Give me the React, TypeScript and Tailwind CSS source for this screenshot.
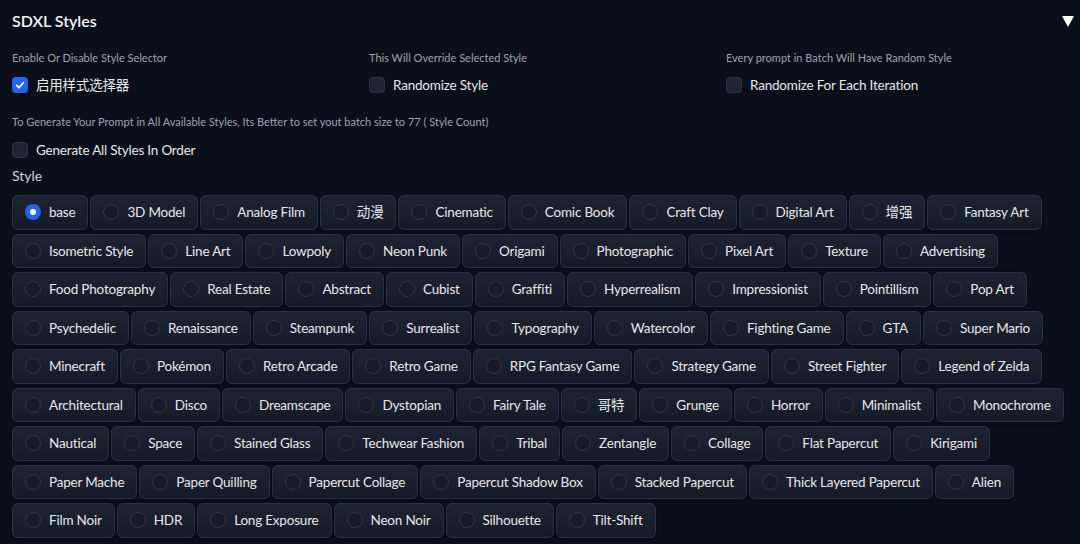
import { useState } from 'react';

const rows: string[][] = [
  ['base', '3D Model', 'Analog Film', '动漫', 'Cinematic', 'Comic Book', 'Craft Clay', 'Digital Art', '增强', 'Fantasy Art'],
  ['Isometric Style', 'Line Art', 'Lowpoly', 'Neon Punk', 'Origami', 'Photographic', 'Pixel Art', 'Texture', 'Advertising'],
  ['Food Photography', 'Real Estate', 'Abstract', 'Cubist', 'Graffiti', 'Hyperrealism', 'Impressionist', 'Pointillism', 'Pop Art'],
  ['Psychedelic', 'Renaissance', 'Steampunk', 'Surrealist', 'Typography', 'Watercolor', 'Fighting Game', 'GTA', 'Super Mario'],
  ['Minecraft', 'Pokémon', 'Retro Arcade', 'Retro Game', 'RPG Fantasy Game', 'Strategy Game', 'Street Fighter', 'Legend of Zelda'],
  ['Architectural', 'Disco', 'Dreamscape', 'Dystopian', 'Fairy Tale', '哥特', 'Grunge', 'Horror', 'Minimalist', 'Monochrome'],
  ['Nautical', 'Space', 'Stained Glass', 'Techwear Fashion', 'Tribal', 'Zentangle', 'Collage', 'Flat Papercut', 'Kirigami'],
  ['Paper Mache', 'Paper Quilling', 'Papercut Collage', 'Papercut Shadow Box', 'Stacked Papercut', 'Thick Layered Papercut', 'Alien'],
  ['Film Noir', 'HDR', 'Long Exposure', 'Neon Noir', 'Silhouette', 'Tilt-Shift'],
];

const font = { fontFamily: '"Source Sans Pro", Lato, "Noto Sans CJK SC", sans-serif' };

const Check = ({ checked, label, onToggle }: { checked: boolean; label: string; onToggle: () => void }) => (
  <label className="flex items-center gap-2 cursor-pointer h-[20px]" onClick={onToggle}>
    {checked ? (
      <span className="w-4 h-4 rounded-[4px] bg-[#2563eb] flex items-center justify-center">
        <svg viewBox="0 0 16 16" className="w-3 h-3" fill="none" stroke="white" strokeWidth="2.4" strokeLinecap="round" strokeLinejoin="round">
          <path d="M3.5 8.5l3 3 6-6.5" />
        </svg>
      </span>
    ) : (
      <span className="w-4 h-4 rounded-[4px] bg-[#1f2633] border border-[#2c3442]" />
    )}
    <span className="text-[13.5px] tracking-[-0.2px] text-[#e5e7eb]">{label}</span>
  </label>
);

export default function App() {
  const [style, setStyle] = useState('base');
  const [enabled, setEnabled] = useState(true);
  const [rand, setRand] = useState(false);
  const [randEach, setRandEach] = useState(false);
  const [all, setAll] = useState(false);

  return (
    <div className="min-h-[544px] w-[1080px] bg-[#0b0f19] px-3 text-[#e5e7eb] overflow-hidden" style={font}>
      <div className="flex items-center justify-between h-[42px]">
        <h2 className="text-[16px] font-semibold text-[#f3f4f6]">SDXL Styles</h2>
        <svg viewBox="0 0 12 12" className="w-3 h-3 mr-[-6px]" fill="white">
          <path d="M0 1h12L6 12z" />
        </svg>
      </div>

      <div className="grid grid-cols-3 gap-x-[15px] mt-[8px]">
        <div>
          <p className="text-[11px] text-[#9ca3af] leading-[16px]">Enable Or Disable Style Selector</p>
          <div className="mt-[9px]">
            <Check checked={enabled} label="启用样式选择器" onToggle={() => setEnabled(!enabled)} />
          </div>
        </div>
        <div>
          <p className="text-[11px] text-[#9ca3af] leading-[16px]">This Will Override Selected Style</p>
          <div className="mt-[9px]">
            <Check checked={rand} label="Randomize Style" onToggle={() => setRand(!rand)} />
          </div>
        </div>
        <div>
          <p className="text-[11px] text-[#9ca3af] leading-[16px]">Every prompt in Batch Will Have Random Style</p>
          <div className="mt-[9px]">
            <Check checked={randEach} label="Randomize For Each Iteration" onToggle={() => setRandEach(!randEach)} />
          </div>
        </div>
      </div>

      <p className="text-[11px] text-[#9ca3af] leading-[16px] mt-[19px]">
        To Generate Your Prompt in All Available Styles, Its Better to set yout batch size to 77 ( Style Count)
      </p>
      <div className="mt-[10px]">
        <Check checked={all} label="Generate All Styles In Order" onToggle={() => setAll(!all)} />
      </div>

      <p className="text-[14px] text-[#d1d5db] mt-[6px] leading-[20px]">Style</p>

      <div className="flex flex-col gap-y-[4px] mt-[9px]">
        {rows.map((row, i) => (
          <div key={i} className="flex gap-x-[2px]">
            {row.map((name) => {
              const on = style === name;
              return (
                <label
                  key={name}
                  onClick={() => setStyle(name)}
                  className="flex items-center gap-2 h-[34.5px] pl-3 pr-3 rounded-[6px] border border-[#2a3140] bg-gradient-to-t from-[#151b26] to-[#1d2431] cursor-pointer shadow-sm"
                >
                  {on ? (
                    <span className="w-4 h-4 rounded-full bg-[#2563eb] flex items-center justify-center">
                      <span className="w-[6px] h-[6px] rounded-full bg-white" />
                    </span>
                  ) : (
                    <span className="w-4 h-4 rounded-full bg-[#161c27] border border-[#2f3745]" />
                  )}
                  <span className="text-[13.5px] tracking-[-0.2px] text-[#e5e7eb] whitespace-nowrap">{name}</span>
                </label>
              );
            })}
          </div>
        ))}
      </div>
    </div>
  );
}
